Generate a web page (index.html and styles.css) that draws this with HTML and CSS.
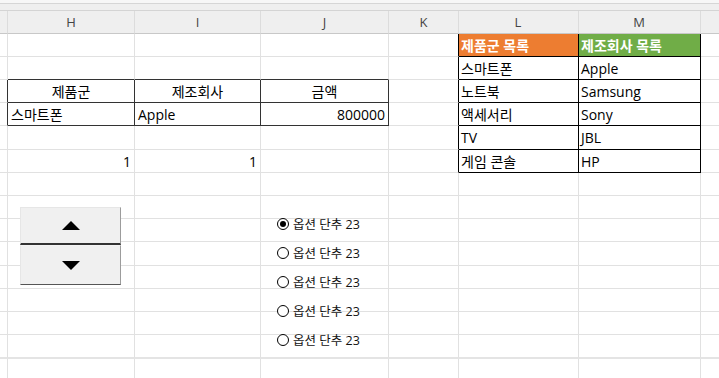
FILE: index.html
```html
<!DOCTYPE html>
<html lang="ko">
<head>
<meta charset="utf-8">
<link rel="stylesheet" href="styles.css">
</head>
<body>
<div class="sheet">
  <div class="topbar"></div>
  <div class="row hdr">
    <div class="c w0"></div><div class="c wh">H</div><div class="c wi">I</div><div class="c wj">J</div><div class="c wk">K</div><div class="c wl">L</div><div class="c wm">M</div><div class="c wn"></div>
  </div>
  <div class="row">
    <div class="c w0"></div><div class="c wh"></div><div class="c wi"></div><div class="c wj"></div><div class="c wk k-r"></div><div class="c wl k-r k-b orange">제품군 목록</div><div class="c wm k-r k-b green">제조회사 목록</div><div class="c wn"></div>
  </div>
  <div class="row">
    <div class="c w0"></div><div class="c wh d-b"></div><div class="c wi d-b"></div><div class="c wj d-b"></div><div class="c wk k-r"></div><div class="c wl k-r k-b">스마트폰</div><div class="c wm k-r k-b">Apple</div><div class="c wn"></div>
  </div>
  <div class="row">
    <div class="c w0 d-r"></div><div class="c wh d-r d-b ctr">제품군</div><div class="c wi d-r d-b ctr">제조회사</div><div class="c wj d-r d-b ctr">금액</div><div class="c wk k-r"></div><div class="c wl k-r k-b">노트북</div><div class="c wm k-r k-b">Samsung</div><div class="c wn"></div>
  </div>
  <div class="row">
    <div class="c w0 d-r"></div><div class="c wh d-r d-b">스마트폰</div><div class="c wi d-r d-b">Apple</div><div class="c wj d-r d-b rt">800000</div><div class="c wk k-r"></div><div class="c wl k-r k-b">액세서리</div><div class="c wm k-r k-b">Sony</div><div class="c wn"></div>
  </div>
  <div class="row tall">
    <div class="c w0"></div><div class="c wh"></div><div class="c wi"></div><div class="c wj"></div><div class="c wk k-r"></div><div class="c wl k-r k-b">TV</div><div class="c wm k-r k-b">JBL</div><div class="c wn"></div>
  </div>
  <div class="row">
    <div class="c w0"></div><div class="c wh rt">1</div><div class="c wi rt">1</div><div class="c wj"></div><div class="c wk k-r"></div><div class="c wl k-r k-b">게임 콘솔</div><div class="c wm k-r k-b">HP</div><div class="c wn"></div>
  </div>
  <div class="row">
    <div class="c w0"></div><div class="c wh"></div><div class="c wi"></div><div class="c wj"></div><div class="c wk"></div><div class="c wl"></div><div class="c wm"></div><div class="c wn"></div>
  </div>
  <div class="row">
    <div class="c w0"></div><div class="c wh"></div><div class="c wi"></div><div class="c wj"></div><div class="c wk"></div><div class="c wl"></div><div class="c wm"></div><div class="c wn"></div>
  </div>
  <div class="row">
    <div class="c w0"></div><div class="c wh"></div><div class="c wi"></div><div class="c wj"></div><div class="c wk"></div><div class="c wl"></div><div class="c wm"></div><div class="c wn"></div>
  </div>
  <div class="row tall">
    <div class="c w0"></div><div class="c wh"></div><div class="c wi"></div><div class="c wj"></div><div class="c wk"></div><div class="c wl"></div><div class="c wm"></div><div class="c wn"></div>
  </div>
  <div class="row">
    <div class="c w0"></div><div class="c wh"></div><div class="c wi"></div><div class="c wj"></div><div class="c wk"></div><div class="c wl"></div><div class="c wm"></div><div class="c wn"></div>
  </div>
  <div class="row">
    <div class="c w0"></div><div class="c wh"></div><div class="c wi"></div><div class="c wj"></div><div class="c wk"></div><div class="c wl"></div><div class="c wm"></div><div class="c wn"></div>
  </div>
  <div class="row">
    <div class="c w0"></div><div class="c wh"></div><div class="c wi"></div><div class="c wj"></div><div class="c wk"></div><div class="c wl"></div><div class="c wm"></div><div class="c wn"></div>
  </div>
  <div class="row tall thick">
    <div class="c w0"></div><div class="c wh"></div><div class="c wi"></div><div class="c wj"></div><div class="c wk"></div><div class="c wl"></div><div class="c wm"></div><div class="c wn"></div>
  </div>
  <div class="row">
    <div class="c w0"></div><div class="c wh"></div><div class="c wi"></div><div class="c wj"></div><div class="c wk"></div><div class="c wl"></div><div class="c wm"></div><div class="c wn"></div>
  </div>
</div>

<div class="spin">
  <div class="spin-btn up">
    <svg width="18" height="9" viewBox="0 0 18 9"><polygon points="9,0 18,9 0,9" fill="#000"/></svg>
  </div>
  <div class="spin-btn down">
    <svg width="18" height="9" viewBox="0 0 18 9"><polygon points="0,0 18,0 9,9" fill="#000"/></svg>
  </div>
</div>

<div class="radios">
  <div class="radio"><span class="dot on"></span><span>옵션 단추 23</span></div>
  <div class="radio"><span class="dot"></span><span>옵션 단추 23</span></div>
  <div class="radio"><span class="dot"></span><span>옵션 단추 23</span></div>
  <div class="radio"><span class="dot"></span><span>옵션 단추 23</span></div>
  <div class="radio"><span class="dot"></span><span>옵션 단추 23</span></div>
</div>
</body>
</html>
```

FILE: styles.css
```css
* { box-sizing: border-box; }
html, body { margin: 0; padding: 0; background: #fff; }
body {
  position: relative;
  width: 719px;
  height: 378px;
  overflow: hidden;
  font-family: "Open Sans", "Noto Sans CJK KR", sans-serif;
  font-size: 14px;
  color: #000;
}

.topbar {
  height: 10px;
  border-top: 3px solid #f7f7f7;
  background: linear-gradient(#d6d6d6 0 1px, #efefef 1px);
}

.row { display: flex; height: 23px; }
.row.tall { height: 24px; }

.c {
  height: 100%;
  display: flex;
  align-items: center;
  padding: 0 3px;
  white-space: nowrap;
  overflow: hidden;
  border-right: 1px solid #e1e1e1;
  border-bottom: 1px solid #e1e1e1;
}
.thick .c { border-bottom: 2px solid #e4e4e4; }

.w0 { width: 8px; padding: 0; }
.wh { width: 127px; }
.wi { width: 126px; }
.wj { width: 128px; }
.wk { width: 70px; }
.wl { width: 120px; padding-left: 2px; }
.wm { width: 122px; padding-left: 2px; }
.wn { flex: 1; border-right: none; }

.hdr {
  height: 24px;
  border-top: 1px solid #d4d4d4;
  background: #efefef;
}
.hdr .c {
  justify-content: center;
  font-size: 13px;
  color: #444;
  border-right-color: #dcdcdc;
  border-bottom-color: #c8c8c8;
}

.ctr { justify-content: center; }
.rt { justify-content: flex-end; }

.d-r { border-right-color: #333; }
.d-b { border-bottom-color: #333; }
.k-r { border-right-color: #000; }
.k-b { border-bottom-color: #000; }

.orange { background: #ed7d31; color: #fff; font-weight: bold; }
.green { background: #70ad47; color: #fff; font-weight: bold; }

/* form controls floating over the sheet */
.spin {
  position: absolute;
  left: 20px;
  top: 207px;
  width: 101px;
}
.spin-btn {
  display: flex;
  align-items: center;
  justify-content: center;
  background: #f0f0f0;
  border: 1px solid;
  border-color: #e6e6e6 #9c9c9c #9c9c9c #e6e6e6;
}
.spin-btn.up { height: 38px; border-bottom: 2px solid #333; }
.spin-btn.down { height: 40px; border-top-color: #f4f4f4; border-bottom-color: #555; }

.radios {
  position: absolute;
  left: 277px;
  top: 209px;
  display: flex;
  flex-direction: column;
}
.radio {
  height: 29px;
  display: flex;
  align-items: center;
  gap: 4px;
  font-size: 12.5px;
  color: #111;
}
.dot {
  width: 12px;
  height: 12px;
  border: 1px solid #000;
  border-radius: 50%;
  background: #fff;
  display: flex;
  align-items: center;
  justify-content: center;
}
.dot.on::after {
  content: "";
  width: 6px;
  height: 6px;
  border-radius: 50%;
  background: #000;
}
```
